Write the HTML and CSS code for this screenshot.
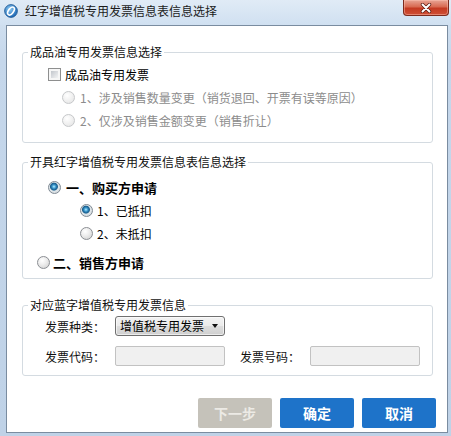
FILE: index.html
```html
<!DOCTYPE html>
<html lang="zh-CN">
<head>
<meta charset="utf-8">
<title>红字增值税专用发票信息表信息选择</title>
<link rel="stylesheet" href="styles.css">
</head>
<body>
<div class="window">
  <div class="titlebar">
    <svg class="app-icon" viewBox="0 0 14 14" width="14" height="14">
      <defs>
        <radialGradient id="ig" cx="40%" cy="35%" r="70%">
          <stop offset="0" stop-color="#8ccaf3"/>
          <stop offset="1" stop-color="#1560b0"/>
        </radialGradient>
      </defs>
      <circle cx="7" cy="7" r="6.4" fill="url(#ig)" stroke="#1c5592" stroke-width="0.8"/>
      <ellipse cx="7" cy="7" rx="2.5" ry="4.5" transform="rotate(35 7 7)" fill="none" stroke="#fff" stroke-width="1.6"/>
    </svg>
    <span class="title">红字增值税专用发票信息表信息选择</span>
    <div class="close">
      <svg viewBox="0 0 12 10" width="12" height="10">
        <path d="M2.5 1.5 L9.5 8.5 M9.5 1.5 L2.5 8.5" stroke="#5a1a10" stroke-width="3.4" stroke-linecap="round"/>
        <path d="M2.5 1.5 L9.5 8.5 M9.5 1.5 L2.5 8.5" stroke="#fff" stroke-width="2" stroke-linecap="round"/>
      </svg>
    </div>
  </div>

  <div class="client">
    <fieldset class="group group-oil">
      <legend class="group-title">成品油专用发票信息选择</legend>
      <div class="body-oil">
        <div class="row row-23"><span class="checkbox"></span><span class="lbl-chk">成品油专用发票</span></div>
        <div class="row row-23 sub disabled"><span class="radio off"></span><span class="lbl-sub">1、涉及销售数量变更（销货退回、开票有误等原因）</span></div>
        <div class="row row-23 sub disabled"><span class="radio off"></span><span class="lbl-sub">2、仅涉及销售金额变更（销售折让）</span></div>
      </div>
    </fieldset>

    <fieldset class="group group-red">
      <legend class="group-title">开具红字增值税专用发票信息表信息选择</legend>
      <div class="body-red">
        <div class="row buyer"><span class="radio on"></span><span class="lbl-bold">一、购买方申请</span></div>
        <div class="row deduct h23"><span class="radio on"></span><span class="lbl-d">1、已抵扣</span></div>
        <div class="row deduct h22"><span class="radio"></span><span class="lbl-d">2、未抵扣</span></div>
        <div class="row seller"><span class="radio"></span><span class="lbl-bold lbl-seller">二、销售方申请</span></div>
      </div>
    </fieldset>

    <fieldset class="group group-blue">
      <legend class="group-title">对应蓝字增值税专用发票信息</legend>
      <div class="body-blue">
        <div class="form-row">
          <span class="field-label">发票种类：</span>
          <div class="select"><span>增值税专用发票</span><span class="arrow"></span></div>
        </div>
        <div class="form-row">
          <span class="field-label">发票代码：</span>
          <input class="textbox" type="text" disabled>
          <span class="field-label second">发票号码：</span>
          <input class="textbox" type="text" disabled>
        </div>
      </div>
    </fieldset>

    <div class="footer">
      <button class="btn btn-disabled" type="button" disabled>下一步</button>
      <button class="btn btn-primary" type="button">确定</button>
      <button class="btn btn-primary" type="button">取消</button>
    </div>
  </div>
</div>
</body>
</html>
```

FILE: styles.css
```css
html, body {
  margin: 0;
  padding: 0;
}

body {
  width: 451px;
  height: 436px;
  overflow: hidden;
  font-family: "Noto Sans CJK SC", "Noto Sans", sans-serif;
  font-size: 12px;
  color: #000;
  background: #c3d5e9;
}

.window {
  width: 451px;
  height: 436px;
  display: flex;
  flex-direction: column;
  background: linear-gradient(#d6e4f2, #c5d7eb 60px, #bfd2e7);
}

/* Title bar */
.titlebar {
  height: 25px;
  flex: none;
  display: flex;
  align-items: flex-start;
  background: linear-gradient(#e0ebf6, #d0e0f1);
}

.app-icon {
  flex: none;
  margin: 4px 0 0 4px;
}

.title {
  margin: 2px 0 0 7px;
  font-size: 12px;
  line-height: 17px;
  color: #1b1b1b;
}

.close {
  margin-left: auto;
  margin-right: 2px;
  width: 46px;
  height: 16px;
  box-sizing: border-box;
  border: 1px solid #7c2a1d;
  border-top: none;
  border-radius: 0 0 4px 4px;
  background: linear-gradient(#e8a595 0%, #d86a52 45%, #c43a22 55%, #cf4f36 100%);
  box-shadow: inset 0 0 0 1px rgba(255, 200, 185, 0.45);
  display: flex;
  align-items: center;
  justify-content: center;
}

/* Client area */
.client {
  flex: 1;
  margin: 0 3px 3px 6px;
  border: 1px solid #7a8ca0;
  background: #fff;
  display: flex;
  flex-direction: column;
}

.group {
  margin: 0 14px 0 15px;
  padding: 0;
  border: 1px solid #d4dbe1;
  border-radius: 3px;
  min-width: 0;
}

.group-oil { margin-top: 18px; }
.group-red { margin-top: 11px; }
.group-blue { margin-top: 18px; }

.group-title {
  margin-left: 5px;
  padding: 0 2px;
  font-size: 12px;
  line-height: 16px;
  color: #111;
}

.row {
  display: flex;
  align-items: center;
}

/* Group 1 */
.body-oil {
  padding: 3px 0 10px 25px;
}

.row-23 { height: 23px; }

.sub { margin-left: 14px; }

.lbl-chk { margin-left: 4px; }

.lbl-sub {
  margin-left: 5px;
  color: #8c8c8c;
}

/* Group 2 */
.body-red {
  padding: 5px 0 4px 0;
}

.buyer {
  height: 24px;
  margin-left: 25px;
}

.deduct { margin-left: 57px; }
.h23 { height: 23px; }
.h22 { height: 22px; }

.seller {
  height: 24px;
  margin-top: 6px;
  margin-left: 14px;
}

.lbl-bold {
  margin-left: 5px;
  font-size: 13px;
  font-weight: bold;
}

.lbl-seller { margin-left: 3px; }

.lbl-d { margin-left: 4px; }

/* Controls */
.checkbox {
  flex: none;
  width: 13px;
  height: 13px;
  box-sizing: border-box;
  border: 1px solid #8e8f8f;
  padding: 2px;
  background: linear-gradient(135deg, #c2c6cc, #f2f3f4) content-box, #f6f6f6;
}

.radio {
  flex: none;
  width: 13px;
  height: 13px;
  box-sizing: border-box;
  border-radius: 50%;
  border: 1px solid #8b8e93;
  background: radial-gradient(circle at 38% 32%, #ffffff 0, #eeeeee 40%, #cdcdcd 100%);
}

.radio.on {
  border-color: #7f8a94;
  background: radial-gradient(circle at 45% 42%, #c4efff 0, #5cb6e2 1.2px, #2a7db3 2.4px, #1b5f8d 3.5px, #dfe6ea 4.4px, #cfd3d6 100%);
}

.radio.off {
  border-color: #c6c8ca;
  background: radial-gradient(circle at 38% 32%, #ffffff 0, #f2f2f2 45%, #e2e2e2 100%);
}

/* Group 3 */
.body-blue {
  padding: 3px 0 9px 22px;
  display: flex;
  flex-direction: column;
  gap: 10px;
}

.form-row {
  display: flex;
  align-items: center;
  height: 20px;
}

.field-label {
  width: 70px;
  flex: none;
  color: #111;
}

.field-label.second {
  margin-left: 15px;
}

.select {
  width: 110px;
  height: 20px;
  box-sizing: border-box;
  border: 1px solid #707070;
  border-radius: 3px;
  padding-left: 4px;
  display: flex;
  align-items: center;
  background: linear-gradient(#f3f3f3 0%, #ebebeb 48%, #dddddd 52%, #cfcfcf 100%);
  box-shadow: inset 0 0 0 1px rgba(255, 255, 255, 0.6);
  line-height: 18px;
}

.arrow {
  margin-left: auto;
  margin-right: 6px;
  width: 0;
  height: 0;
  border-left: 3.5px solid transparent;
  border-right: 3.5px solid transparent;
  border-top: 4px solid #111;
}

.textbox {
  width: 110px;
  height: 20px;
  box-sizing: border-box;
  margin: 0;
  padding: 0;
  border: 1px solid #c2c2c2;
  border-radius: 2px;
  background: #f0f0f0;
  font: inherit;
}

/* Footer buttons */
.footer {
  margin-top: 22px;
  padding-right: 11px;
  display: flex;
  justify-content: flex-end;
  gap: 8px;
}

.btn {
  width: 74px;
  height: 30px;
  margin: 0;
  padding: 0;
  border: none;
  border-radius: 2px;
  font-family: "Noto Sans CJK SC", "Noto Sans", sans-serif;
  font-size: 14px;
  font-weight: bold;
  color: #fff;
}

.btn-primary {
  background: #1e73c9;
}

.btn-disabled {
  background: #c5c2ba;
  color: #eceae5;
}
```
